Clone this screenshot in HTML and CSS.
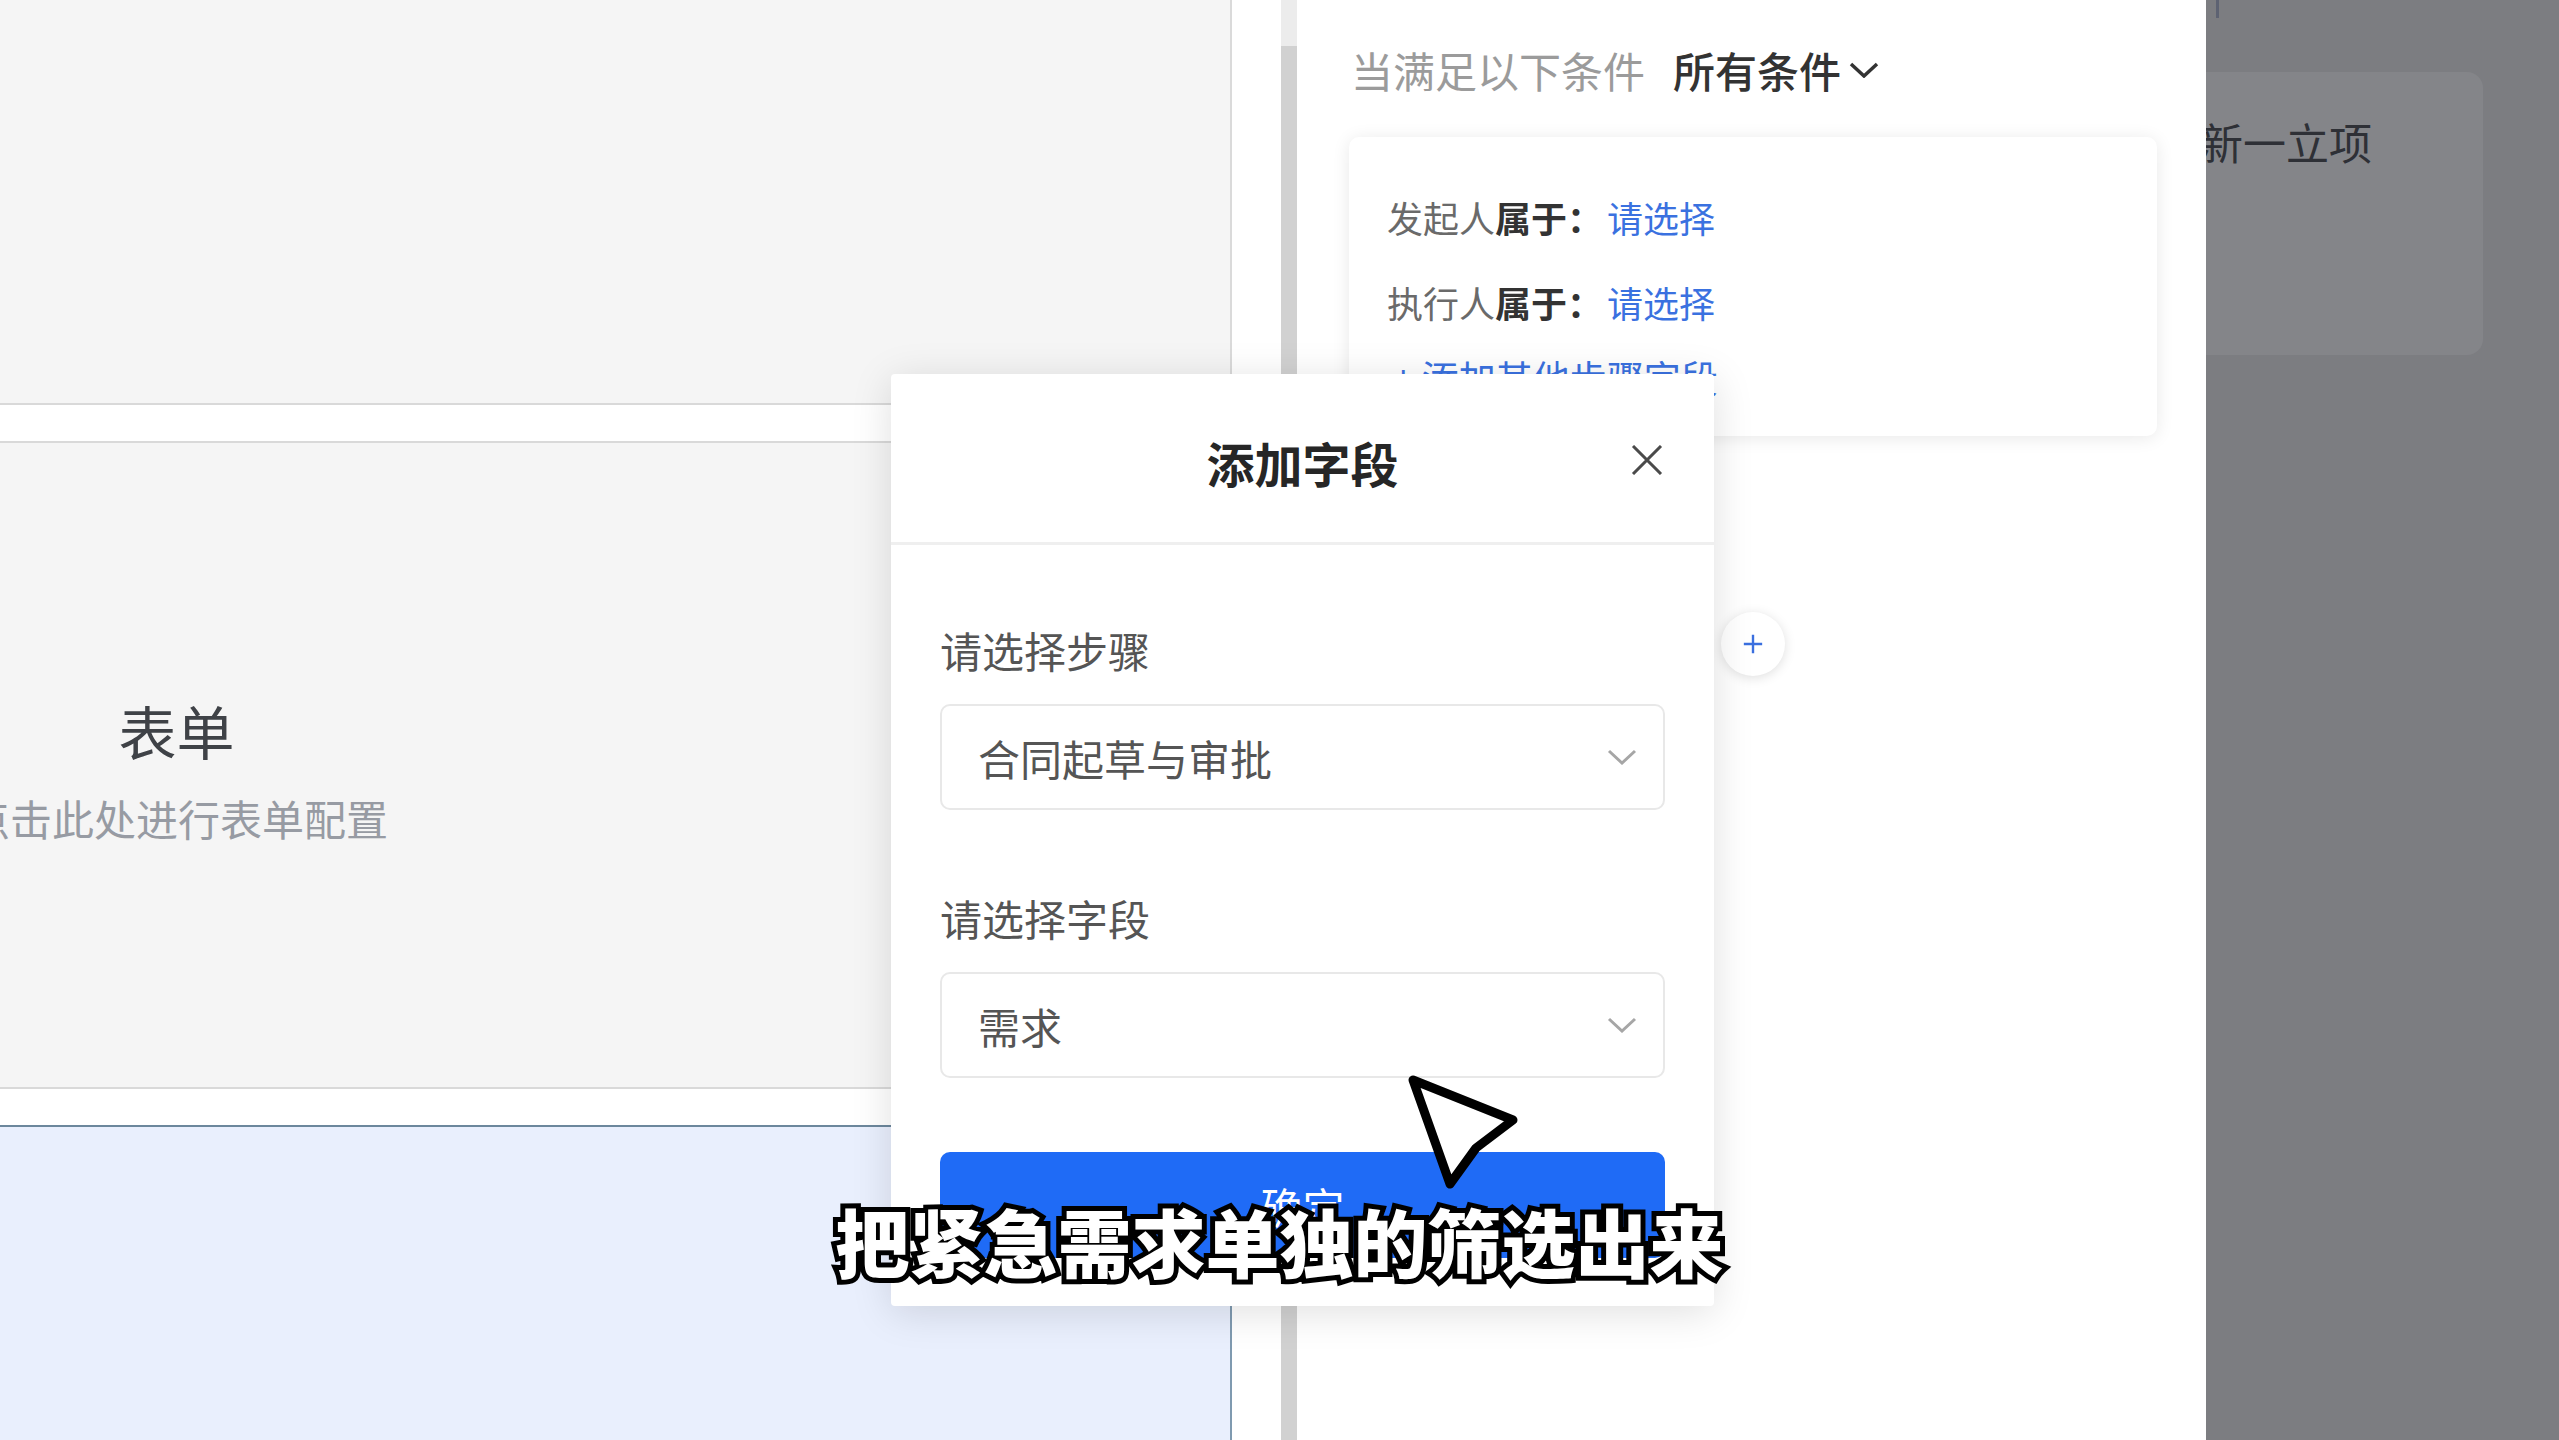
FILE: index.html
```html
<!DOCTYPE html>
<html lang="zh-CN">
<head>
<meta charset="utf-8">
<title>流程条件配置</title>
<link rel="stylesheet" href="styles.css">
</head>
<body>
<div class="app">
  <section class="canvas">
    <div class="node node-top"></div>
    <div class="node-gap"></div>
    <div class="node node-form">
      <div class="node-label">
        <div class="node-title">表单</div>
        <div class="node-desc">点击此处进行表单配置</div>
      </div>
    </div>
    <div class="node-gap"></div>
    <div class="node node-active"></div>
  </section>

  <div class="gutter"></div>
  <div class="scrollbar"><div class="thumb"></div></div>

  <aside class="panel">
    <div class="cond-head">
      <span class="cond-muted">当满足以下条件</span>
      <span class="cond-mode">所有条件<svg class="mode-caret" viewBox="0 0 30 16"><path d="M2 2 L15 14 L28 2"/></svg></span>
    </div>
    <div class="cond-card">
      <div class="cond-row"><span class="cond-key">发起人</span><span class="cond-op">属于：</span><span class="cond-link">请选择</span></div>
      <div class="cond-row"><span class="cond-key">执行人</span><span class="cond-op">属于：</span><span class="cond-link">请选择</span></div>
      <div class="cond-add">+ 添加其他步骤字段</div>
    </div>
    <button class="add-branch" type="button">
      <svg viewBox="0 0 24 24"><path d="M12 2 V22 M2 12 H22"/></svg>
    </button>
  </aside>

  <div class="mask">
    <div class="mask-tick"></div>
    <div class="mask-card"><span class="mask-text">新一立项</span></div>
  </div>
</div>

<div class="dialog">
  <div class="dialog-head">
    <span class="dialog-title">添加字段</span>
    <svg class="dialog-close" viewBox="0 0 32 30"><path d="M2 1 L30 29 M30 1 L2 29"/></svg>
  </div>
  <div class="dialog-body">
    <div class="field">
      <div class="field-label">请选择步骤</div>
      <div class="select"><span>合同起草与审批</span><svg class="select-caret" viewBox="0 0 30 16"><path d="M2 2 L15 14 L28 2"/></svg></div>
    </div>
    <div class="field">
      <div class="field-label">请选择字段</div>
      <div class="select"><span>需求</span><svg class="select-caret" viewBox="0 0 30 16"><path d="M2 2 L15 14 L28 2"/></svg></div>
    </div>
    <button class="btn-primary" type="button">确定</button>
  </div>
</div>

<div class="caption">把紧急需求单独的筛选出来</div>

<svg class="pointer" viewBox="0 0 125 125">
  <path d="M13 10 L113 50 L76 78 L50 114 Z"/>
</svg>
</body>
</html>
```

FILE: styles.css
```css
body {
  margin: 0;
  width: 2559px;
  height: 1440px;
  overflow: hidden;
  position: relative;
  background: #fff;
  font-family: "Noto Sans CJK SC", "Noto Sans", sans-serif;
}

.app {
  display: flex;
  height: 1440px;
}

/* ---------- flow canvas (left) ---------- */
.canvas {
  width: 1232px;
  flex: none;
  display: flex;
  flex-direction: column;
}

.node {
  border-right: 2px solid #dadada;
}

.node-top {
  height: 403px;
  background: #f5f5f5;
  border-bottom: 2px solid #d9d9d9;
}

.node-gap {
  height: 36px;
  background: #fff;
}

.node-form {
  height: 634px;
  padding-top: 10px;
  background: #f5f5f5;
  border-top: 2px solid #d9d9d9;
  border-bottom: 2px solid #d9d9d9;
  display: flex;
  align-items: center;
}

.node-label {
  width: 417px;
  margin-left: -32px;
  text-align: center;
}

.node-title {
  font-size: 58px;
  line-height: 70px;
  color: #3f4247;
}

.node-desc {
  margin-top: 25px;
  font-size: 42px;
  line-height: 56px;
  color: #979ba3;
  white-space: nowrap;
}

.node-active {
  flex: 1;
  background: #e9effd;
  border-top: 2px solid #6c879c;
  border-right-color: #7f9ab0;
}

.gutter {
  width: 49px;
  flex: none;
}

.scrollbar {
  width: 16px;
  flex: none;
  background: #ececec;
  display: flex;
  flex-direction: column;
}

.thumb {
  margin-top: 46px;
  flex: 1;
  background: #d1d1d1;
}

/* ---------- condition panel ---------- */
.panel {
  width: 909px;
  flex: none;
  box-sizing: border-box;
  padding: 40px 49px 0 52px;
  background: #fff;
}

.cond-head {
  display: flex;
  align-items: center;
  height: 59px;
  font-size: 42px;
  padding-left: 2px;
}

.cond-muted {
  color: #9b9b9b;
}

.cond-mode {
  margin-left: 28px;
  color: #333;
  font-weight: 500;
  display: flex;
  align-items: center;
}

.mode-caret {
  width: 30px;
  height: 16px;
  margin-left: 8px;
  fill: none;
  stroke: #333;
  stroke-width: 3.5;
}

.cond-card {
  margin-top: 38px;
  height: 299px;
  box-sizing: border-box;
  padding: 55px 38px 0;
  border-radius: 10px;
  background: #fff;
  box-shadow: 0 2px 18px rgba(0, 0, 0, 0.09);
}

.cond-row {
  display: flex;
  font-size: 36px;
  line-height: 50px;
  margin-bottom: 35px;
}

.cond-row + .cond-row {
  margin-bottom: 25px;
}

.cond-key {
  color: #6a6a6a;
}

.cond-op {
  color: #333;
  font-weight: 600;
}

.cond-link {
  margin-left: 4px;
  color: #3a71e0;
}

.cond-add {
  font-size: 37px;
  line-height: 50px;
  color: #3a71e0;
  padding-left: 6px;
}

.add-branch {
  display: block;
  margin: 176px auto 0;
  width: 64px;
  height: 64px;
  padding: 0;
  border: none;
  border-radius: 50%;
  background: #fff;
  box-shadow: 0 2px 12px rgba(0, 0, 0, 0.13);
}

.add-branch svg {
  display: block;
  width: 22px;
  height: 22px;
  margin: 0 auto;
  fill: none;
  stroke: #3a6fdf;
  stroke-width: 2.6;
}

/* ---------- dimmed area (right) ---------- */
.mask {
  flex: 1;
  background: #7c7d81;
  overflow: hidden;
}

.mask-tick {
  width: 3px;
  height: 18px;
  margin-left: 10px;
  background: #5d6272;
}

.mask-card {
  margin: 54px 0 0 -20px;
  width: 297px;
  height: 283px;
  box-sizing: border-box;
  padding: 39px 0 0 14px;
  border-radius: 16px;
  background: #848589;
}

.mask-text {
  font-size: 43px;
  line-height: 60px;
  color: #2e3036;
  white-space: nowrap;
}

/* ---------- add field dialog ---------- */
.dialog {
  position: absolute;
  left: 891px;
  top: 374px;
  width: 823px;
  height: 932px;
  background: #fff;
  border-radius: 4px;
  box-shadow: 0 6px 40px rgba(0, 0, 0, 0.13);
}

.dialog-head {
  position: relative;
  height: 160px;
  padding-top: 8px;
  border-bottom: 3px solid #efefef;
  display: flex;
  align-items: center;
  justify-content: center;
}

.dialog-title {
  font-size: 48px;
  font-weight: 600;
  color: #262626;
}

.dialog-close {
  position: absolute;
  right: 51px;
  top: 71px;
  width: 32px;
  height: 30px;
  fill: none;
  stroke: #4a4a4a;
  stroke-width: 3;
}

.dialog-body {
  padding: 75px 49px 0;
}

.field + .field {
  margin-top: 78px;
}

.field-label {
  font-size: 42px;
  line-height: 59px;
  color: #555;
  margin-bottom: 25px;
}

.select {
  height: 106px;
  box-sizing: border-box;
  border: 2px solid #e8e8e8;
  border-radius: 10px;
  padding: 0 26px 0 36px;
  display: flex;
  align-items: center;
  justify-content: space-between;
  font-size: 42px;
  color: #555;
}

.select-caret {
  width: 30px;
  height: 16px;
  fill: none;
  stroke: #a6a6a6;
  stroke-width: 3;
}

.btn-primary {
  display: block;
  width: 100%;
  height: 106px;
  margin-top: 74px;
  border: none;
  border-radius: 10px;
  background: #1f6bf6;
  color: #fff;
  font-family: inherit;
  font-size: 42px;
}

/* ---------- video caption & pointer ---------- */
.caption {
  position: absolute;
  left: 0;
  right: 0;
  top: 1192px;
  text-align: center;
  font-size: 74px;
  line-height: 96px;
  font-weight: 900;
  color: #fff;
  -webkit-text-stroke: 10px #000;
  paint-order: stroke fill;
  white-space: nowrap;
}

.pointer {
  position: absolute;
  left: 1400px;
  top: 1070px;
  width: 125px;
  height: 125px;
  fill: #fff;
  stroke: #000;
  stroke-width: 9;
  stroke-linejoin: round;
}
```
